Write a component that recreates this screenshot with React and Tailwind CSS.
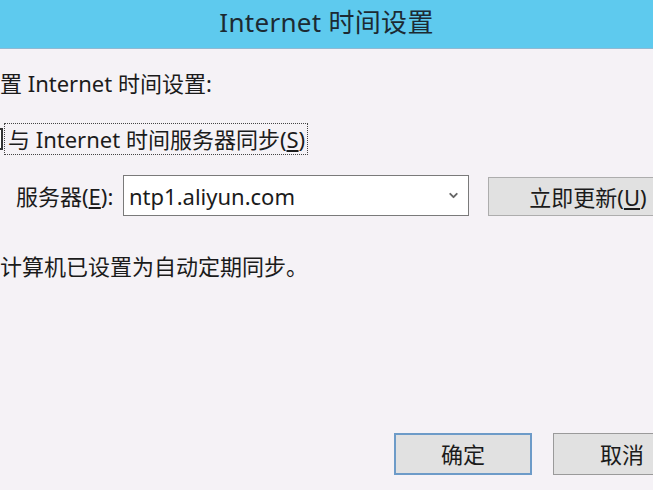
import { ChevronDown } from 'lucide-react';

const font = "font-['Noto_Sans','Noto_Sans_CJK_SC',sans-serif]";

export default function App() {
  return (
    <div className={`w-[653px] h-[490px] overflow-hidden flex flex-col bg-[#f5f2f6] text-[#1b1b1b] ${font}`}>
      {/* title bar */}
      <div className="h-[49px] shrink-0 flex items-center justify-center bg-[#5ecaee] border-b border-[#8fb9d3]">
        <span className="text-[26px] leading-none text-[#1c2a33] tracking-[0.3px] -mt-[4px]">Internet 时间设置</span>
      </div>

      <div className="flex flex-col">
        <div className="h-[22px] mt-[23px] flex items-center text-[22px] leading-none">置 Internet 时间设置:</div>

        {/* sync checkbox */}
        <div className="mt-[29px] flex items-center h-[32px]">
          <div className="w-[15px] h-[22px] -ml-[12px] border-2 border-[#333] bg-white shrink-0" />
          <div className="ml-[1px] h-[32px] pl-[3px] pr-[2px] flex items-center border border-dotted border-[#444] text-[22px] leading-none">
            与 Internet 时间服务器同步(<span className="underline underline-offset-2">S</span>)
          </div>
        </div>

        {/* server row */}
        <div className="mt-[20px] h-[41px] flex items-center">
          <span className="ml-[16px] w-[107px] shrink-0 text-[22px] leading-none">
            服务器(<span className="underline underline-offset-2">E</span>):
          </span>
          <div className="w-[346px] h-[41px] shrink-0 bg-white border border-[#7a7a7a] flex items-center justify-between pl-[5px] pr-[8px]">
            <span className="text-[22px] leading-none">ntp1.aliyun.com</span>
            <ChevronDown className="w-[13px] h-[13px] text-[#666]" strokeWidth={3.5} />
          </div>
          <div className="ml-[19px] mt-[2px] w-[200px] h-[39px] shrink-0 bg-[#e1e1e1] border border-[#adadad] flex items-center justify-center text-[22px] leading-none">
            立即更新(<span className="underline underline-offset-2">U</span>)
          </div>
        </div>

        <div className="mt-[39px] h-[22px] flex items-center text-[22px] leading-none">计算机已设置为自动定期同步。</div>

        {/* bottom buttons */}
        <div className="mt-[156px] flex">
          <div className="ml-[394px] w-[138px] h-[42px] shrink-0 bg-[#e1e1e1] border-2 border-[#6d9bc8] flex items-center justify-center text-[22px] leading-none">
            确定
          </div>
          <div className="ml-[21px] w-[138px] h-[42px] shrink-0 bg-[#e1e1e1] border border-[#9a9a9a] flex items-center justify-center text-[22px] leading-none">
            取消
          </div>
        </div>
      </div>
    </div>
  );
}
